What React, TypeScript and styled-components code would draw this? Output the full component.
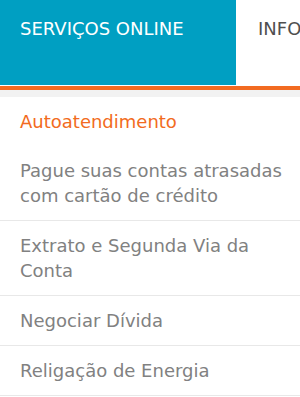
import styled, { createGlobalStyle } from "styled-components";

const GlobalStyle = createGlobalStyle`
  html, body {
    margin: 0;
    padding: 0;
    background: #ffffff;
  }

  body {
    font-family: "DejaVu Sans", Verdana, sans-serif;
  }
`;

const menuItems = [
  { label: "Autoatendimento", active: true },
  { label: "Pague suas contas atrasadas com cartão de crédito" },
  { label: "Extrato e Segunda Via da Conta" },
  { label: "Negociar Dívida" },
  { label: "Religação de Energia" },
];

const App = () => {
  return (
    <Page>
      <GlobalStyle />
      <Nav>
        <Tab $active>SERVIÇOS ONLINE</Tab>
        <Tab>INFORMAÇÕES</Tab>
      </Nav>

      <Menu>
        {menuItems.map((item) => (
          <MenuItem key={item.label} $active={item.active}>
            <a href="#!">{item.label}</a>
          </MenuItem>
        ))}
      </Menu>
    </Page>
  );
};

export default App;

const Page = styled.div`
  width: 300px;
  overflow: hidden;
`;

const Nav = styled.nav`
  display: flex;
  background: #ffffff;
  padding-bottom: 1px;
  border-bottom: 4px solid #f26b21;
  overflow: hidden;
`;

const Tab = styled.div<{ $active?: boolean }>`
  flex: ${(p) => (p.$active ? "0 0 236px" : "0 0 auto")};
  box-sizing: border-box;
  height: 85px;
  padding: 16px ${(p) => (p.$active ? "20px" : "22px")};
  background: ${(p) => (p.$active ? "#009fc2" : "#ffffff")};
  color: ${(p) => (p.$active ? "#ffffff" : "#4f4f4f")};
  font-size: 18px;
  line-height: 25px;
  white-space: nowrap;
`;

const Menu = styled.ul`
  list-style: none;
  margin: 0;
  padding: 0;
  border-top: 7px solid #f2f2f2;
`;

const MenuItem = styled.li<{ $active?: boolean }>`
  padding: 12px 8px 12px 20px;
  border-bottom: 1px solid #e8e8e8;
  font-size: 18px;
  line-height: 25px;

  a {
    color: ${(p) => (p.$active ? "#f26b21" : "#818181")};
    text-decoration: none;
  }

  &:first-child {
    border-bottom: none;
  }
`;
